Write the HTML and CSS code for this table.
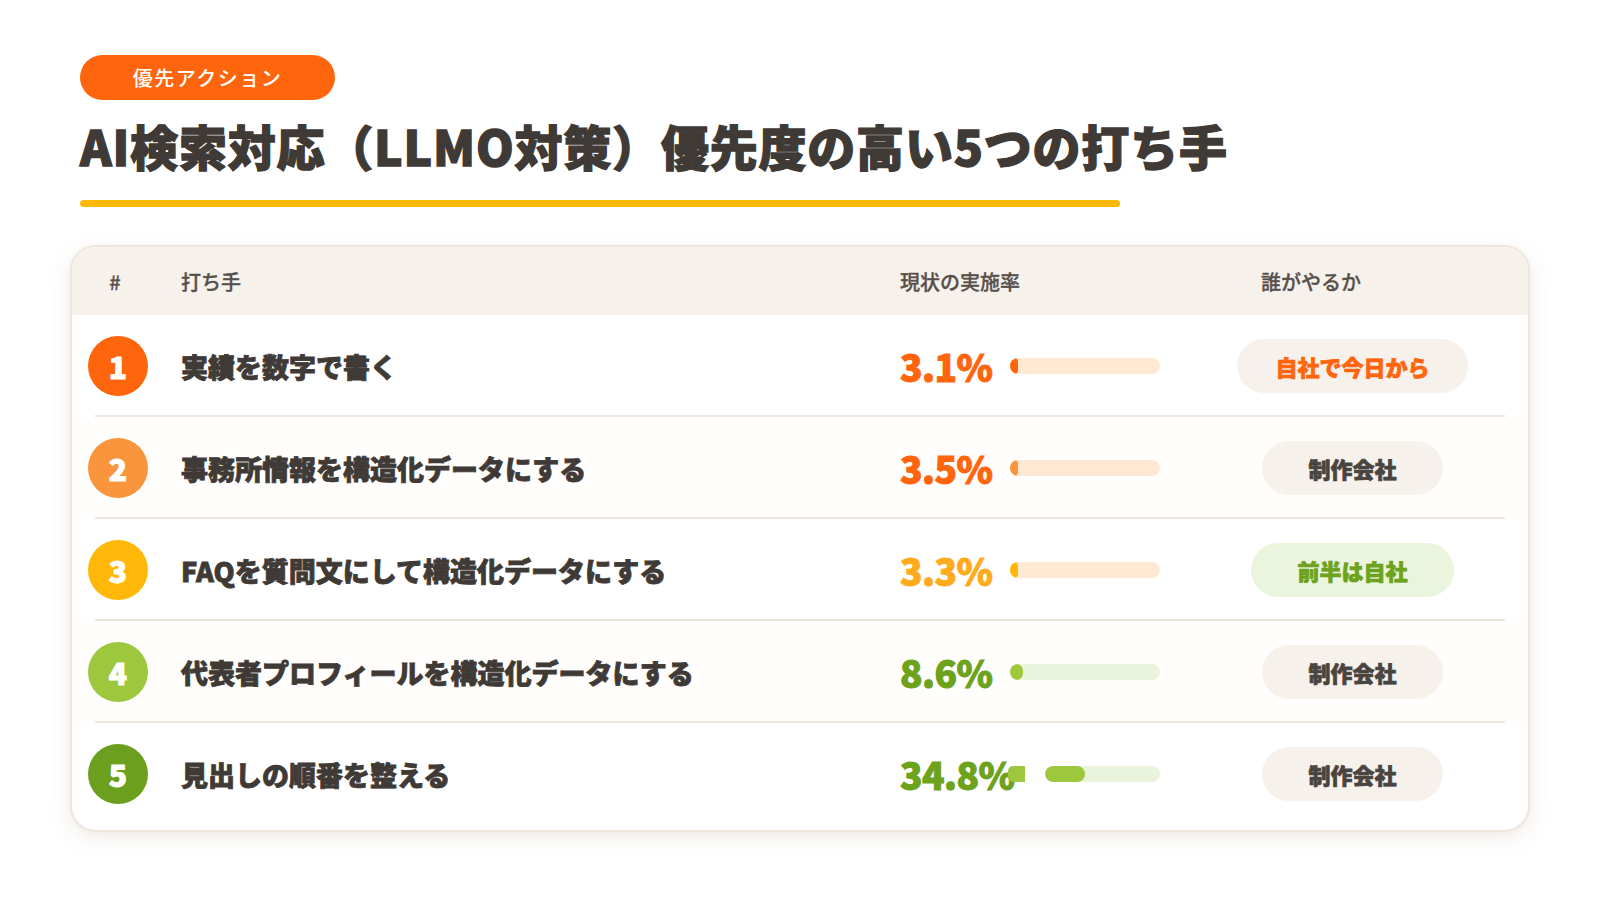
FILE: index.html
```html
<!DOCTYPE html>
<html lang="ja">
<head>
<meta charset="utf-8">
<title>優先アクション</title>
<link rel="stylesheet" href="styles.css">
</head>
<body>
<div class="page">
  <div class="badge">優先アクション</div>
  <h1 class="title">AI検索対応（LLMO対策）優先度の高い5つの打ち手</h1>
  <div class="rule"></div>

  <div class="card">
    <div class="row head">
      <div class="c-num">#</div>
      <div class="c-act">打ち手</div>
      <div class="c-rate">現状の実施率</div>
      <div class="c-who head-who">誰がやるか</div>
    </div>

    <div class="row r1">
      <div class="c-num"><span class="circle">1</span></div>
      <div class="c-act act">実績を数字で書く</div>
      <div class="c-rate"><span class="pct">3.1%</span><span class="track"><span class="fill" style="width:8px"></span></span></div>
      <div class="c-who"><span class="pill pill-self">自社で今日から</span></div>
    </div>

    <div class="row r2 alt">
      <div class="c-num"><span class="circle">2</span></div>
      <div class="c-act act">事務所情報を構造化データにする</div>
      <div class="c-rate"><span class="pct">3.5%</span><span class="track"><span class="fill" style="width:8px"></span></span></div>
      <div class="c-who"><span class="pill">制作会社</span></div>
    </div>

    <div class="row r3">
      <div class="c-num"><span class="circle">3</span></div>
      <div class="c-act act">FAQを質問文にして構造化データにする</div>
      <div class="c-rate"><span class="pct">3.3%</span><span class="track"><span class="fill" style="width:8px"></span></span></div>
      <div class="c-who"><span class="pill pill-half">前半は自社</span></div>
    </div>

    <div class="row r4 alt">
      <div class="c-num"><span class="circle">4</span></div>
      <div class="c-act act">代表者プロフィールを構造化データにする</div>
      <div class="c-rate"><span class="pct">8.6%</span><span class="track"><span class="fill" style="width:13px"></span></span></div>
      <div class="c-who"><span class="pill">制作会社</span></div>
    </div>

    <div class="row r5 last">
      <div class="c-num"><span class="circle">5</span></div>
      <div class="c-act act">見出しの順番を整える</div>
      <div class="c-rate"><span class="pct">34.8%</span><span class="glitch"><span class="chip"></span><span class="track short"><span class="fill" style="width:40px"></span></span></span></div>
      <div class="c-who"><span class="pill">制作会社</span></div>
    </div>
  </div>
</div>
</body>
</html>
```

FILE: styles.css
```css
* { box-sizing: border-box; }

html, body {
  margin: 0;
  padding: 0;
  background: #ffffff;
}

body {
  font-family: "Noto Sans CJK JP", "Noto Sans", sans-serif;
  color: #3f3a36;
}

.page {
  width: 1600px;
  height: 900px;
  padding: 55px 80px 0;
  display: flex;
  flex-direction: column;
  align-items: flex-start;
}

.badge {
  width: 255px;
  height: 45px;
  border-radius: 23px;
  background: #ff650c;
  color: #ffffff;
  font-size: 20px;
  font-weight: 500;
  letter-spacing: 1.5px;
  display: flex;
  align-items: center;
  justify-content: center;
}

.title {
  margin: 16px 0 0;
  font-size: 48px;
  line-height: 58px;
  font-weight: 900;
  color: #3f3a36;
  letter-spacing: 0.8px;
  -webkit-text-stroke: 1.3px #3f3a36;
  white-space: nowrap;
}

.rule {
  margin-top: 26px;
  width: 1040px;
  height: 7px;
  border-radius: 4px;
  background: #ffb807;
}

.card {
  margin: 38px -10px 0;
  width: 1460px;
  border: 2px solid #efe7dd;
  border-radius: 26px;
  overflow: hidden;
  background: #ffffff;
  box-shadow: 0 6px 22px rgba(120, 90, 50, 0.10), 0 1px 4px rgba(120, 90, 50, 0.05);
}

.row {
  display: grid;
  grid-template-columns: 60px 686px 297px 245px;
  column-gap: 33px;
  align-items: center;
  padding: 0 53px 0 16px;
  height: 102px;
  position: relative;
}

.row::after {
  content: "";
  position: absolute;
  left: 23px;
  right: 23px;
  bottom: 0;
  height: 2px;
  background: #eee7df;
}

.row.last::after,
.row.head::after { display: none; }

.row.last { height: 107px; padding-bottom: 5px; }

.row.alt { background: #fffefc; }

.row.head {
  height: 68px;
  background: #f6f1eb;
  font-size: 20px;
  font-weight: 500;
  color: #57504a;
  -webkit-text-stroke: 0.3px #57504a;
}

.head .c-num { text-align: center; padding-right: 6px; }
.c-who.head-who { justify-content: flex-start; padding-left: 31px; }

.circle {
  width: 60px;
  height: 60px;
  border-radius: 50%;
  display: flex;
  align-items: center;
  justify-content: center;
  color: #ffffff;
  font-size: 30px;
  font-weight: 900;
  -webkit-text-stroke: 1px #ffffff;
}

.r1 .circle { background: #ff650c; }
.r2 .circle { background: #fb953d; }
.r3 .circle { background: #ffb807; }
.r4 .circle { background: #9dc83e; }
.r5 .circle { background: #6c9f1e; }

.act {
  font-size: 27px;
  font-weight: 900;
  color: #3f3a36;
  -webkit-text-stroke: 0.8px #3f3a36;
  white-space: nowrap;
}

.c-rate {
  display: flex;
  align-items: center;
}

.pct {
  width: 110px;
  flex: none;
  font-size: 37px;
  font-weight: 900;
  letter-spacing: -0.5px;
  -webkit-text-stroke: 1px currentColor;
  white-space: nowrap;
  line-height: 1;
}

.track {
  width: 150px;
  height: 16px;
  border-radius: 8px;
  display: flex;
  overflow: hidden;
}

.fill {
  display: block;
  height: 100%;
  border-radius: 8px;
}

.r1 .pct, .r2 .pct { color: #ff650c; }
.r3 .pct { color: #ffab1e; }
.r4 .pct, .r5 .pct { color: #6da21c; }

.r1 .track, .r2 .track, .r3 .track { background: #ffe9d3; }
.r4 .track, .r5 .track { background: #eaf3dc; }

.r1 .fill { background: #ff650c; }
.r2 .fill { background: #fb953d; }
.r3 .fill { background: #ffb807; }
.r4 .fill, .r5 .fill { background: #9dc83e; }

.glitch {
  display: flex;
  align-items: center;
  width: 150px;
  position: relative;
  z-index: 1;
}

.chip {
  width: 17px;
  height: 16px;
  border-radius: 5px 0 0 5px;
  background: #9dc83e;
  margin-left: -2px;
  flex: none;
}

.track.short {
  width: auto;
  flex: 1;
  margin-left: 20px;
}

.c-who {
  display: flex;
  justify-content: center;
}

.pill {
  height: 54px;
  border-radius: 27px;
  padding: 0 46px;
  display: flex;
  align-items: center;
  background: #f6f1eb;
  color: #4a443f;
  font-size: 22px;
  font-weight: 900;
  -webkit-text-stroke: 0.7px currentColor;
  white-space: nowrap;
}

.pill-self { color: #ff650c; padding: 0 38px; }
.pill-half { background: #ebf4dd; color: #6da21c; }
```
